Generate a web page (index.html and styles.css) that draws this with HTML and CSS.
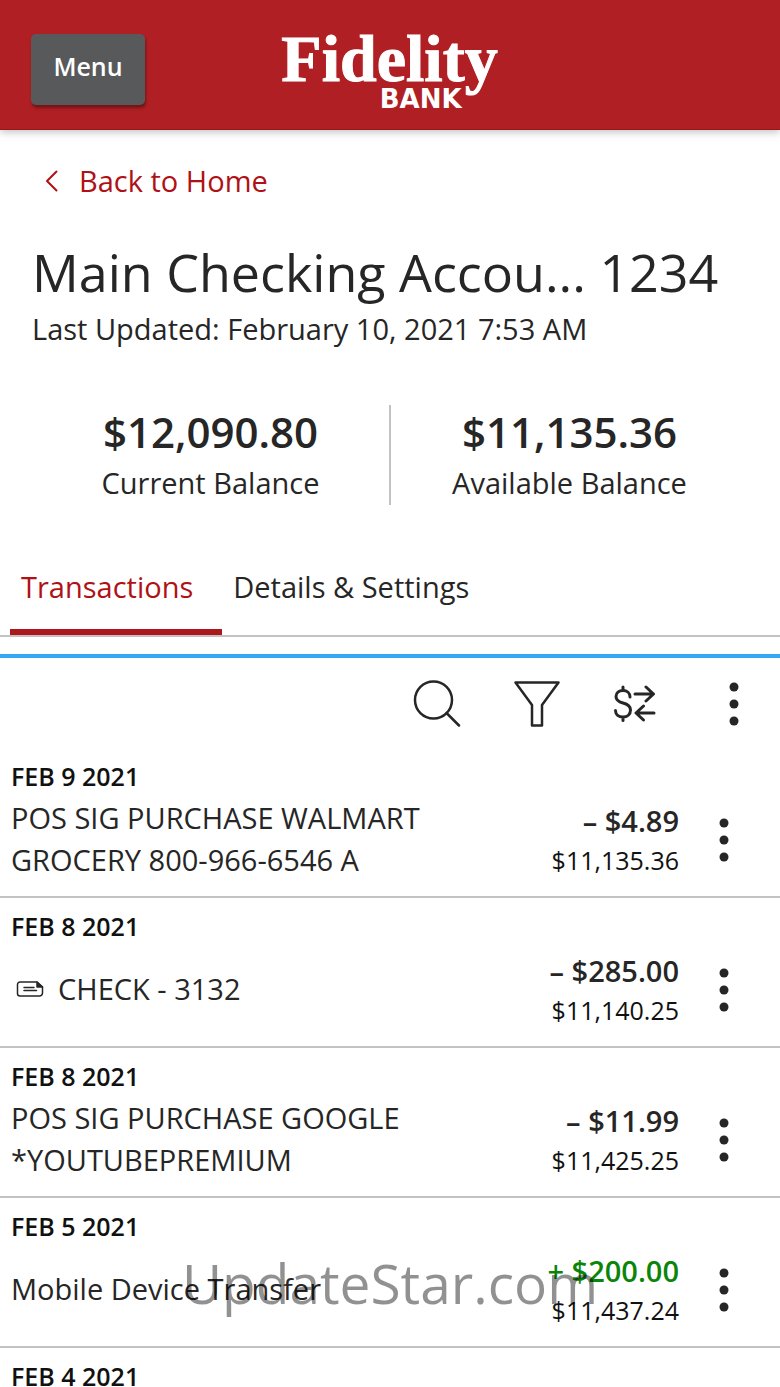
FILE: index.html
```html
<!DOCTYPE html>
<html lang="en">
<head>
<meta charset="utf-8">
<meta name="viewport" content="width=device-width, initial-scale=1">
<title>Fidelity Bank</title>
<link rel="stylesheet" href="styles.css">
</head>
<body>
<svg class="sprite" aria-hidden="true">
  <symbol id="dots" viewBox="0 0 10 44">
    <circle cx="5" cy="5" r="4.5"/><circle cx="5" cy="22" r="4.5"/><circle cx="5" cy="39" r="4.5"/>
  </symbol>
</svg>
<div class="app">
  <header class="topbar">
    <button class="menu-button" type="button">Menu</button>
    <div class="logo">
      <span class="logo-name">Fidelity</span>
      <span class="logo-sub">BANK</span>
    </div>
  </header>

  <main class="page">
    <section class="summary">
      <a class="back" href="#">
        <svg class="back-icon" viewBox="0 0 14 22" aria-hidden="true"><path d="M11.500 1.500 2 11l9.500 9.500"/></svg>
        Back to Home
      </a>
      <h1 class="title">Main Checking Accou... 1234</h1>
      <p class="updated">Last Updated: February 10, 2021 7:53 AM</p>
      <div class="balances">
        <div class="balance"><strong class="balance-value">$12,090.80</strong><span class="balance-label">Current Balance</span></div>
        <div class="balance"><strong class="balance-value">$11,135.36</strong><span class="balance-label">Available Balance</span></div>
      </div>
    </section>

    <nav class="tabs">
      <button class="tab tab-active" type="button">Transactions</button>
      <button class="tab" type="button">Details &amp; Settings</button>
    </nav>

    <div class="toolbar">
      <button class="tool" type="button" aria-label="Search">
        <svg class="icon-search" viewBox="0 0 48 48"><circle cx="20.500" cy="20" r="18.500"/><path d="M33.500 33 46 45.500"/></svg>
      </button>
      <button class="tool" type="button" aria-label="Filter">
        <svg class="icon-filter" viewBox="0 0 48 48"><path d="M2.500 2.500h43L29 25v20.500H19V25z"/></svg>
      </button>
      <button class="tool" type="button" aria-label="Transfer money">
        <svg class="icon-transfer" viewBox="0 0 44 38"><path d="M17 12c0-4-3-6.500-7-6.500S3 8 3 11.500c0 4 3 5.500 7 6.500s7.500 2.500 7.500 7-3.300 7-7.500 7-7.500-2.500-7.500-6.500M10 2v3.500M10 32v3.500M22 9h18M33 2l7.500 7L33 16M41 28H24M30.500 21 23 28l7.500 7"/></svg>
      </button>
      <button class="tool tool-more" type="button" aria-label="More options">
        <svg class="icon-dots"><use href="#dots"/></svg>
      </button>
    </div>

    <ul class="list">
      <li class="row">
        <p class="date">FEB 9 2021</p>
        <div class="entry">
          <p class="desc">POS SIG PURCHASE WALMART GROCERY 800-966-6546 A</p>
          <p class="money"><strong class="amount">– $4.89</strong><span class="running">$11,135.36</span></p>
          <button class="more" type="button" aria-label="Transaction options"><svg class="icon-dots"><use href="#dots"/></svg></button>
        </div>
      </li>
      <li class="row">
        <p class="date">FEB 8 2021</p>
        <div class="entry">
          <p class="desc"><svg class="icon-check" viewBox="0 0 28 18" aria-hidden="true"><path d="M4 2h17l5.500 5v6a3 3 0 0 1-3 3H4a2.500 2.500 0 0 1-2.500-2.500v-9A2.500 2.500 0 0 1 4 2z"/><path d="M8 7.500h10M8 10.500h12.500"/><path class="fold" d="M21 2v5h5.500z"/></svg>CHECK - 3132</p>
          <p class="money"><strong class="amount">– $285.00</strong><span class="running">$11,140.25</span></p>
          <button class="more" type="button" aria-label="Transaction options"><svg class="icon-dots"><use href="#dots"/></svg></button>
        </div>
      </li>
      <li class="row">
        <p class="date">FEB 8 2021</p>
        <div class="entry">
          <p class="desc">POS SIG PURCHASE GOOGLE *YOUTUBEPREMIUM</p>
          <p class="money"><strong class="amount">– $11.99</strong><span class="running">$11,425.25</span></p>
          <button class="more" type="button" aria-label="Transaction options"><svg class="icon-dots"><use href="#dots"/></svg></button>
        </div>
      </li>
      <li class="row">
        <p class="date">FEB 5 2021</p>
        <div class="entry">
          <p class="desc">Mobile Device Transfer</p>
          <p class="money"><strong class="amount amount-in">+ $200.00</strong><span class="running">$11,437.24</span></p>
          <button class="more" type="button" aria-label="Transaction options"><svg class="icon-dots"><use href="#dots"/></svg></button>
        </div>
      </li>
      <li class="row">
        <p class="date">FEB 4 2021</p>
      </li>
    </ul>
  </main>
  <div class="watermark">UpdateStar.com</div>
</div>
</body>
</html>
```
FILE: styles.css
```css
* { box-sizing: border-box; }

body, h1, p, ul { margin: 0; padding: 0; }

body {
  background: #fff;
  color: #262626;
  font-family: "Open Sans", "Noto Sans", sans-serif;
  font-size: 29px;
}

button {
  margin: 0;
  padding: 0;
  border: 0;
  background: none;
  color: inherit;
  font: inherit;
  cursor: pointer;
}

svg { display: block; fill: none; stroke: #262626; stroke-width: 2.5; stroke-linecap: round; stroke-linejoin: round; }

.sprite { position: absolute; width: 0; height: 0; }

.app { position: relative; height: 100vh; overflow: hidden; }

.topbar {
  position: relative;
  display: grid;
  grid-template-columns: 1fr auto 1fr;
  align-items: start;
  padding: 34px 32px 15px 31px;
  background: #b01f24;
  border-bottom: 1px solid #9c1318;
  box-shadow: 0 2px 8px rgba(0, 0, 0, 0.25);
}

.menu-button {
  justify-self: start;
  width: 114px;
  height: 71px;
  padding-bottom: 8px;
  border-radius: 5px;
  background: #58595b;
  box-shadow: 1px 3px 3px rgba(0, 0, 0, 0.35);
  color: #fff;
  font-size: 25px;
  font-weight: 600;
}

.logo { display: grid; color: #fff; font-weight: 700; }

.logo-name {
  font-family: "Liberation Serif", serif;
  font-size: 66px;
  line-height: 50px;
  -webkit-text-stroke: 1px #fff;
}

.logo-sub {
  justify-self: end;
  padding-right: 36px;
  font-family: "DejaVu Sans", sans-serif;
  font-size: 26px;
  line-height: 30px;
}

.summary { padding: 30px 32px 0; }

.back {
  display: flex;
  align-items: center;
  gap: 20px;
  padding-left: 13px;
  color: #b01116;
  line-height: 42px;
  text-decoration: none;
}

.back-icon { width: 14px; height: 22px; stroke: #b01116; stroke-width: 2; }

.title { margin-top: 40px; font-size: 52px; font-weight: 400; line-height: 60px; white-space: nowrap; }

.updated { margin-top: 6px; line-height: 42px; }

.balances { display: flex; margin-top: 55px; }

.balance {
  display: flex;
  flex: 1;
  flex-direction: column;
  align-items: center;
  height: 100px;
}

.balance + .balance { border-left: 2px solid #c2c2c2; }

.balance-value { font-size: 42px; font-weight: 600; line-height: 54px; }

.balance-label { line-height: 48px; }

.tabs {
  display: flex;
  margin-top: 46px;
  padding-left: 10px;
  border-bottom: 2px solid #c2c2c2;
}

.tab { padding: 15px 11px 21px; border-bottom: 6px solid transparent; line-height: 42px; }

.tab-active { padding-right: 29px; border-color: #ab191e; color: #b01116; }

.toolbar {
  display: flex;
  justify-content: flex-end;
  align-items: center;
  gap: 52px;
  height: 94px;
  margin-top: 17px;
  padding: 2px 41px 0 0;
  border-top: 4px solid #35a8f4;
}

.icon-search, .icon-filter { width: 48px; height: 48px; }
.icon-transfer { width: 44px; height: 38px; stroke-width: 3; }
.icon-dots { width: 10px; height: 44px; fill: #262626; stroke: none; }
.tool-more { margin-left: 20px; }

.list { list-style: none; }

.row { padding: 10px 51px 14px 11px; border-bottom: 2px solid #c2c2c2; }

.date { margin-bottom: 4px; color: #111; font-size: 25px; font-weight: 600; line-height: 36px; }

.entry { display: flex; align-items: center; height: 84px; }

.desc { display: flex; align-items: center; width: 430px; padding-bottom: 2px; line-height: 42px; }

.icon-check { width: 28px; height: 18px; margin: 0 14px 0 5px; stroke-width: 1.5; }
.fold { fill: #262626; }

.money { display: grid; flex: 1; justify-items: end; }

.amount { font-weight: 600; line-height: 40px; }
.amount-in { color: #0a850a; }

.running { color: #111; font-size: 25px; line-height: 38px; }

.more { margin-left: 40px; }

.watermark {
  position: absolute;
  left: 182px;
  bottom: 64px;
  color: rgba(0, 0, 0, 0.43);
  font-size: 55px;
  line-height: 80px;
  pointer-events: none;
}
```
